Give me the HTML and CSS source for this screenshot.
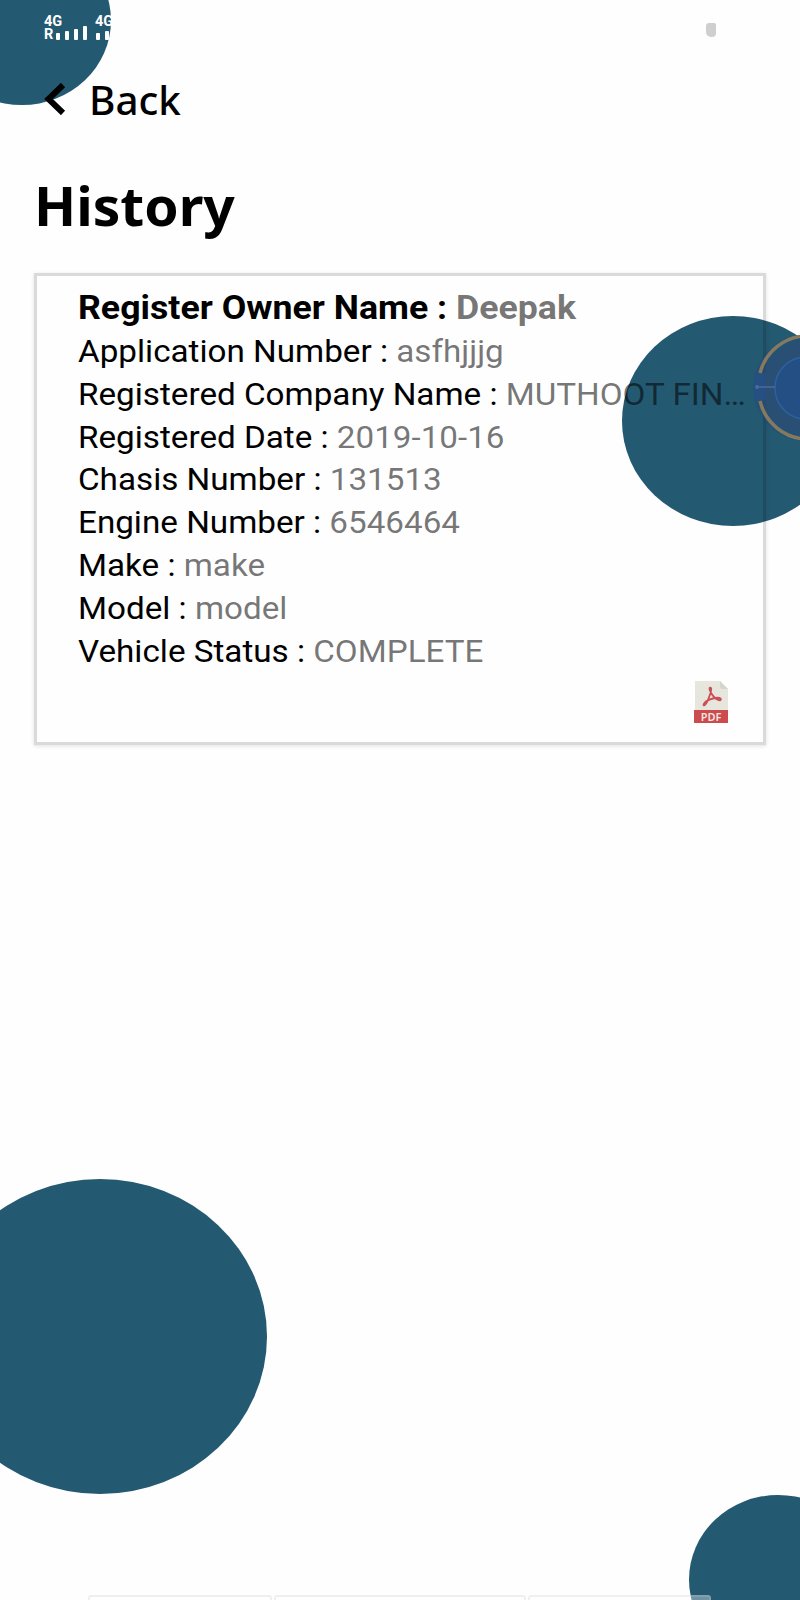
FILE: index.html
```
<!DOCTYPE html>
<html lang="en">
<head>
    <meta charset="UTF-8">
    <meta name="viewport" content="width=device-width, initial-scale=1.0">
    <title>History</title>
    <link rel="stylesheet" href="styles.css">
</head>
<body>
    <!-- background circles -->
    <div class="circle circle-top"></div>
    <div class="circle circle-right"></div>
    <div class="circle circle-left"></div>
    <div class="circle circle-bottom"></div>

    <div class="screen">
        <div class="status-bar">
            <div class="sim">
                <span>4G</span>
                <div class="signal"><span>R</span><i class="b1"></i><i class="b2"></i><i class="b3"></i><i class="b4"></i></div>
            </div>
            <div class="sim">
                <span>4G</span>
                <div class="signal"><i class="b1"></i><i class="b2"></i></div>
            </div>
            <div class="battery"></div>
        </div>

        <div class="back">
            <svg width="22" height="32" viewBox="0 0 22 32"><path d="M19 2 L4.500 16 L19 30" fill="none" stroke="#000" stroke-width="6"/></svg>
            <span>Back</span>
        </div>

        <h1>History</h1>

        <div class="card">
            <p class="owner">Register Owner Name : <span>Deepak</span></p>
            <p>Application Number : <span>asfhjjjg</span></p>
            <p>Registered Company Name : <span>MUTHOOT FIN…</span></p>
            <p>Registered Date : <span>2019-10-16</span></p>
            <p>Chasis Number : <span>131513</span></p>
            <p>Engine Number : <span>6546464</span></p>
            <p>Make : <span>make</span></p>
            <p>Model : <span>model</span></p>
            <p>Vehicle Status : <span>COMPLETE</span></p>
            <svg class="pdf" width="34" height="42" viewBox="0 0 34 42">
                <path d="M1 0H26L34 8V30H1Z" fill="#e7e6dd"/>
                <path d="M26 0L34 8H28Q26 8 26 6Z" fill="#d6d4cc"/>
                <path d="M17 7C14 5 16 12 20 16C24 20 28 20 26.500 17.500C24 15.500 14 18 10.500 22C8 25 11 26 14 19C16 14 18 8 17 7Z" fill="none" stroke="#cb5058" stroke-width="1.900"/>
                <rect y="29" width="34" height="13" fill="#cc4b4e"/>
                <text x="17" y="39.500" text-anchor="middle">PDF</text>
            </svg>
        </div>

        <div class="tabs"><div></div><div></div><div></div></div>
    </div>

    <!-- floating assist button -->
    <svg class="floater" width="48" height="116" viewBox="0 0 48 116">
        <circle cx="54" cy="58" r="53" fill="#24457a" opacity=".35"/>
        <circle cx="54" cy="58" r="46" fill="#2f4f74" opacity=".6"/>
        <circle cx="54" cy="58" r="31" fill="#22508c" opacity=".7"/>
        <rect x="2" y="44" width="12" height="26" fill="#24508a" opacity=".6"/>
        <path d="M8 43A49 50 0 0 1 54 6M8 71A49 50 0 0 0 54 109" fill="none" stroke="#85795f" stroke-width="3.500"/>
        <circle cx="54" cy="58" r="31" fill="none" stroke="#2d62a0" stroke-width="1.500"/>
        <path d="M4 57H23" stroke="#4d6a9a" stroke-width="1.500"/>
        <circle cx="5" cy="57" r="2" fill="#4d6a9a"/>
    </svg>
</body>
</html>
```

FILE: styles.css
```
* {
    box-sizing: border-box;
}
html {
    overflow: hidden;
}
body {
    margin: 0;
    width: 800px;
    height: 1600px;
    position: relative;
    overflow: hidden;
    background-color: #fefefe;
    color: #000;
    font-family: Roboto, sans-serif;
}
.circle {
    position: absolute;
    border-radius: 50%;
    background-color: #245972;
}
.circle-top {
    left: -67px;
    top: -64px;
    width: 178px;
    height: 169px;
}
.circle-right {
    left: 622px;
    top: 316px;
    width: 222px;
    height: 210px;
}
.circle-left {
    left: -67px;
    top: 1179px;
    width: 334px;
    height: 315px;
}
.circle-bottom {
    left: 689px;
    top: 1495px;
    width: 178px;
    height: 169px;
}
.screen {
    position: relative;
    display: flex;
    flex-direction: column;
    height: 1600px;
}
.status-bar {
    display: flex;
    height: 60px;
    padding: 15px 84px 0 44px;
    color: #fefefe;
    font-size: 14.5px;
    font-weight: bold;
    line-height: 13px;
}
.sim {
    width: 51px;
}
.sim > span {
    display: block;
}
.signal {
    display: flex;
    align-items: flex-end;
    gap: 5px;
    height: 12px;
    padding-left: 1px;
}
.signal span {
    width: 10px;
    margin: 0 -3px -2px -1px;
    line-height: 14px;
}
.signal i {
    flex: none;
    width: 4px;
    background-color: #fefefe;
    border-radius: 1px;
}
.b1 { height: 7px; }
.b2 { height: 9px; }
.b3 { height: 11px; }
.b4 { height: 14px; }
.battery {
    width: 10px;
    height: 14px;
    margin: 8px 0 0 auto;
    border-radius: 3px 2px 4px 5px;
    background-color: #cfcfcf;
}
.back {
    display: flex;
    align-items: center;
    gap: 23px;
    height: 78px;
    margin-bottom: 2px;
    padding-left: 44px;
    font-family: "Noto Sans", sans-serif;
    font-size: 39px;
    font-weight: 500;
}
.back span {
    transform: scaleX(1.035);
    transform-origin: left;
}
h1 {
    margin: 0 0 0 34px;
    height: 133px;
    font-family: "Noto Sans", sans-serif;
    font-size: 53px;
    font-weight: bold;
    line-height: 131px;
    transform: scaleX(1.04);
    transform-origin: left;
}
.card {
    display: flex;
    flex-direction: column;
    margin: 0 34px;
    height: 472px;
    padding: 8px 0 0 41px;
    border: 3px solid rgba(0,0,0,0.14);
    box-shadow: 0 1px 4px rgba(0,0,0,0.12);
}
.card p {
    margin: 0;
    font-size: 32px;
    line-height: 42.8px;
    white-space: nowrap;
    transform: scaleX(1.038);
    transform-origin: left;
}
.card p span {
    color: rgba(0,0,0,0.55);
}
.card .owner {
    font-size: 34px;
    font-weight: bold;
    line-height: 46px;
    transform: scaleX(1.05);
}
.pdf {
    align-self: flex-end;
    margin: 9px 35px 0 0;
}
.pdf text {
    fill: #f6e4e2;
    font-family: "Noto Sans", sans-serif;
    font-size: 11px;
    font-weight: 600;
}
.tabs {
    display: flex;
    gap: 2px;
    margin: auto 0 0 88px;
}
.tabs div {
    flex: none;
    width: 184px;
    height: 5px;
    border: 2px solid rgba(236,236,236,0.8);
    border-bottom: none;
    border-radius: 3px 3px 0 0;
}
.tabs div:nth-child(2) {
    width: 252px;
}
.tabs div:nth-child(3) {
    width: 183px;
    border-color: rgba(190,195,200,0.25);
    background-color: rgba(254,254,254,0.35);
}
.floater {
    position: absolute;
    left: 752px;
    top: 330px;
}
```
